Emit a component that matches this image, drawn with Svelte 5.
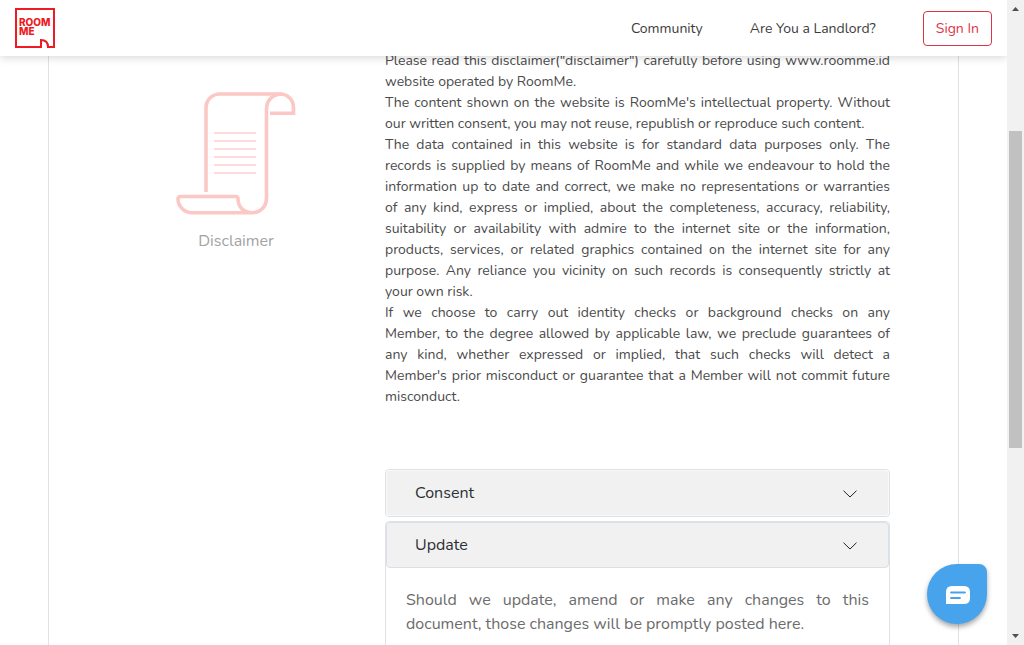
<script>
  const paragraphs = [
    [
      `Please read this disclaimer("disclaimer") carefully before using www.roomme.id`,
      `website operated by RoomMe.`
    ],
    [
      `The content shown on the website is RoomMe's intellectual property. Without`,
      `our written consent, you may not reuse, republish or reproduce such content.`
    ],
    [
      `The data contained in this website is for standard data purposes only. The`,
      `records is supplied by means of RoomMe and while we endeavour to hold the`,
      `information up to date and correct, we make no representations or warranties`,
      `of any kind, express or implied, about the completeness, accuracy, reliability,`,
      `suitability or availability with admire to the internet site or the information,`,
      `products, services, or related graphics contained on the internet site for any`,
      `purpose. Any reliance you vicinity on such records is consequently strictly at`,
      `your own risk.`
    ],
    [
      `If we choose to carry out identity checks or background checks on any`,
      `Member, to the degree allowed by applicable law, we preclude guarantees of`,
      `any kind, whether expressed or implied, that such checks will detect a`,
      `Member's prior misconduct or guarantee that a Member will not commit future`,
      `misconduct.`
    ]
  ];
  let consentOpen = $state(false);
  let updateOpen = $state(true);
</script>

{#snippet chevron()}
  <svg class="chevron" viewBox="0 0 14 8" aria-hidden="true">
    <path d="M0.5 0.7 L7 7 L13.500 0.7" fill="none" stroke="#212529" stroke-width="1" />
  </svg>
{/snippet}

<div class="window">
  <div class="page">
    <header>
      <a class="logo" href="#home" aria-label="RoomMe home">
        <svg viewBox="0 0 40 40" aria-hidden="true">
          <path d="M1 1H39V39H33C33 34.500 31 32 26 32V39H1Z" fill="#fff" stroke="#ed1c24" stroke-width="2" />
          <text x="4" y="18">ROOM</text>
          <text x="4" y="27">ME</text>
        </svg>
      </a>
      <nav>
        <a href="#community">Community</a>
        <a href="#landlord">Are You a Landlord?</a>
        <button class="signin" type="button">Sign In</button>
      </nav>
    </header>

    <main>
      <aside>
        <svg class="scroll" viewBox="0 0 120 123" fill="none" stroke="#fcc8c5" stroke-width="3.600" aria-hidden="true">
          <path d="M30 100V16C30 8 36 2 44 2H104C112 2 117.500 8 117.500 16V21.200H94" />
          <path d="M106 2C97 2 90.500 8 90.500 17V106C90.500 115 84 120.700 76 120.700H16C8 120.700 2 114 2 107Q2 104.500 5 104.500H60Q62 104.500 62 107C62 115 68 120.700 76 120.700" />
          <path d="M38 41H80M38 49H80M38 57H80M38 65H80M38 73H80M38 81H80" stroke="#fddcda" stroke-width="2" />
        </svg>
        <span>Disclaimer</span>
      </aside>

      <article>
        <div class="copy">
          {#each paragraphs as lines}
            <p>
              {#each lines as line}<span class="line">{line}</span>{' '}{/each}
            </p>
          {/each}
        </div>

        <section class="card">
          <button type="button" aria-expanded={consentOpen} onclick={() => (consentOpen = !consentOpen)}>
            Consent {@render chevron()}
          </button>
        </section>
        <section class="card">
          <button class="active" type="button" aria-expanded={updateOpen} onclick={() => (updateOpen = !updateOpen)}>
            Update {@render chevron()}
          </button>
          {#if updateOpen}
            <p class="body">Should we update, amend or make any changes to this document, those changes will be promptly posted here.</p>
          {/if}
        </section>
      </article>
    </main>

    <button class="chat" type="button" aria-label="Open chat">
      <svg viewBox="0 0 24 18" aria-hidden="true">
        <path d="M6 0H18Q24 0 24 6V12Q24 18 18 18H0V6Q0 0 6 0Z" fill="#fff" />
        <path d="M5 6.500H19M5 12H14" stroke="#47a3ec" stroke-width="1.800" stroke-linecap="round" />
      </svg>
    </button>
  </div>

  <div class="scrollbar" aria-hidden="true">
    <svg viewBox="0 0 17 17"><path d="M5 11L8.500 7L12 11Z" fill="#505050" /></svg>
    <div class="track"><div class="thumb"></div></div>
    <svg viewBox="0 0 17 17"><path d="M5 6L8.500 10L12 6Z" fill="#505050" /></svg>
  </div>
</div>

<style>
  :global(body) {
    margin: 0;
    overflow: hidden;
  }
  .window {
    display: grid;
    grid-template-columns: 1fr 17px;
    height: 100vh;
    background: #fff;
    color: #4a4a4a;
    font: 400 14px/21px Nunito, "Open Sans", sans-serif;
  }
  .window * {
    box-sizing: border-box;
  }
  .page {
    position: relative;
    display: flex;
    min-height: 0;
    overflow: hidden;
  }
  header {
    position: absolute;
    z-index: 2;
    inset: 0 0 auto;
    display: flex;
    align-items: center;
    justify-content: space-between;
    height: 56px;
    padding: 0 15px;
    background: #fff;
    box-shadow: 0 2px 8px rgba(0, 0, 0, 0.15);
  }
  .logo svg {
    display: block;
    width: 40px;
    height: 40px;
  }
  .logo text {
    fill: #ed1c24;
    font: 800 10px Inter, sans-serif;
  }
  nav {
    display: flex;
    align-items: center;
    gap: 47px;
  }
  nav a {
    color: #3c3c3c;
    text-decoration: none;
  }
  button {
    font: inherit;
    cursor: pointer;
  }
  .signin {
    height: 35px;
    padding: 0 12px;
    border: 1px solid #dc3545;
    border-radius: 4px;
    background: #fff;
    color: #dc3545;
  }
  main {
    display: flex;
    flex: 1;
    align-items: flex-start;
    height: max-content;
    min-height: 100%;
    margin: 0 48px;
    padding: 50px 68px 0 38px;
    border: solid #dee2e6;
    border-width: 0 1px;
  }
  aside {
    display: flex;
    flex: 0 0 298px;
    flex-direction: column;
    align-items: center;
    gap: 14px;
    padding-top: 42px;
    color: #a3a3a3;
    font-size: 16px;
    line-height: 24px;
  }
  .scroll {
    width: 120px;
    height: 123px;
  }
  article {
    flex: 1;
    min-width: 0;
  }
  .copy {
    margin-bottom: 62px;
    text-align: justify;
  }
  p {
    margin: 0;
  }
  .line {
    display: block;
  }
  .line:not(:last-child) {
    text-align-last: justify;
  }
  .card {
    margin-bottom: 4px;
    border: 1px solid #dee2e6;
    border-radius: 4px;
    font-size: 16px;
    line-height: 24px;
  }
  .card button {
    display: flex;
    align-items: center;
    justify-content: space-between;
    width: 100%;
    height: 46px;
    padding: 0 31px 0 28px;
    border: 1px solid #f8f9fa;
    border-radius: 4px;
    background: #f1f1f1;
    color: #2c3034;
  }
  .card button.active {
    border-color: #dae0e5;
  }
  .chevron {
    width: 14px;
    height: 8px;
    margin-top: 2px;
  }
  .body {
    padding: 20px;
    color: #6c6c6c;
    text-align: justify;
  }
  .chat {
    position: absolute;
    z-index: 3;
    right: 20px;
    bottom: 21px;
    display: grid;
    place-items: center;
    width: 60px;
    height: 60px;
    padding: 2px 0 0 2px;
    border: 0;
    border-radius: 50% 8px 50% 50%;
    background: #47a3ec;
    box-shadow: 0 3px 5px rgba(0, 0, 0, 0.35);
  }
  .chat svg {
    width: 24px;
    height: 18px;
  }
  .scrollbar {
    display: grid;
    grid-template-rows: 17px 1fr 17px;
    background: #f1f1f1;
  }
  .scrollbar svg {
    width: 17px;
    height: 17px;
  }
  .track {
    display: grid;
    grid-template-rows: 114fr 317fr 180fr;
    padding: 0 2px;
  }
  .thumb {
    grid-row: 2;
    background: #c1c1c1;
  }
</style>
